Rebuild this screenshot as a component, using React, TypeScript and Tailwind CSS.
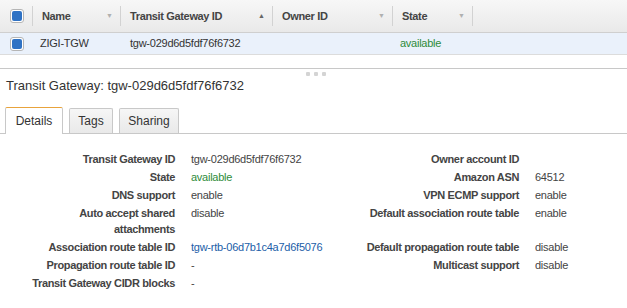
import { ReactNode } from "react";

function Check() {
  return (
    <div className="flex h-[14px] w-[14px] items-center justify-center rounded-[3px] border border-[#b5b5b5] bg-white">
      <div className="h-[10px] w-[10px] rounded-[2px] bg-[#2f72c4]" />
    </div>
  );
}

function Head({ label, w, up }: { label: string; w: string; up?: boolean }) {
  return (
    <div className={`flex h-full items-center border-l border-[#d2d2d2] ${w}`}>
      <div className="flex h-full w-full items-center justify-between pl-[9px] pr-[7px]">
        <span className="font-bold tracking-[-0.35px] text-[#444]">{label}</span>
        <span className={`text-[7px] ${up ? "text-[#666]" : "text-[#b0b0b0]"}`}>{up ? "▲" : "▼"}</span>
      </div>
    </div>
  );
}

function Row({ label, value, label2, value2 }: { label: ReactNode; value: ReactNode; label2?: string; value2?: ReactNode }) {
  return (
    <>
      <div className="text-right font-bold tracking-[-0.35px] text-[#444]">{label}</div>
      <div className="tracking-[-0.25px] text-[#444]">{value}</div>
      <div className="text-right font-bold tracking-[-0.35px] text-[#444]">{label2}</div>
      <div className="tracking-[-0.25px] text-[#444]">{value2}</div>
    </>
  );
}

export default function App() {
  return (
    <div className="h-[308px] w-[627px] overflow-hidden bg-white text-[11px] text-[#444]" style={{ fontFamily: '"Liberation Sans", Arial, sans-serif' }}>
      {/* grid header */}
      <div className="flex h-[33px] items-center border-b border-[#cfcfcf] bg-gradient-to-b from-[#f7f7f7] to-[#e9e9e9] py-[6px]">
        <div className="flex w-[32px] justify-center pl-[1px]">
          <Check />
        </div>
        <Head label="Name" w="w-[88px]" />
        <Head label="Transit Gateway ID" w="w-[152px]" up />
        <Head label="Owner ID" w="w-[120px]" />
        <Head label="State" w="w-[80px]" />
        <div className="h-full border-l border-[#d2d2d2]" />
      </div>
      {/* row */}
      <div className="flex h-[22px] items-center border-b border-[#dcdcdc] bg-[#eaf1fb] tracking-[-0.25px]">
        <div className="flex w-[32px] justify-center pl-[1px]">
          <Check />
        </div>
        <div className="w-[98px] pl-[8px] text-[#333]">ZIGI-TGW</div>
        <div className="w-[270px] text-[#333]">tgw-029d6d5fdf76f6732</div>
        <div className="text-[#2e8b3a]">available</div>
      </div>

      {/* splitter */}
      <div className="mt-[13px] border-t border-[#c8c8c8]" />
      <div className="flex justify-center gap-[4px] pt-[3px] pl-[4px]">
        <div className="h-[4px] w-[4px] rounded-[1px] bg-[#d4d4d4]" />
        <div className="h-[4px] w-[4px] rounded-[1px] bg-[#d4d4d4]" />
        <div className="h-[4px] w-[4px] rounded-[1px] bg-[#d4d4d4]" />
      </div>

      <div className="pl-[6px] pt-[2px] text-[13px] leading-[16px] text-[#333]">Transit Gateway: tgw-029d6d5fdf76f6732</div>

      {/* tabs */}
      <div className="mt-[13px] flex items-end gap-[6px] border-b border-[#c8c8c8] pl-[5px]">
        <div className="-mb-px flex h-[27px] w-[58px] items-center justify-center rounded-t-[2px] border border-b-0 border-[#c8c8c8] border-t-[#e8a33c] bg-white text-[12px] text-[#333]">Details</div>
        <div className="flex h-[25px] w-[44px] items-center justify-center rounded-t-[2px] border border-b-0 border-[#c8c8c8] bg-gradient-to-b from-[#f6f6f6] to-[#e9e9e9] text-[12px] text-[#333]">Tags</div>
        <div className="flex h-[25px] w-[60px] items-center justify-center rounded-t-[2px] border border-b-0 border-[#c8c8c8] bg-gradient-to-b from-[#f6f6f6] to-[#e9e9e9] text-[12px] text-[#333]">Sharing</div>
      </div>

      {/* details */}
      <div className="grid grid-cols-[145px_157px_155px_1fr] gap-x-4 gap-y-[2px] pl-[30px] pt-[17px] leading-[16px]">
        <Row label="Transit Gateway ID" value="tgw-029d6d5fdf76f6732" label2="Owner account ID" value2="" />
        <Row label="State" value={<span className="text-[#2e8b3a]">available</span>} label2="Amazon ASN" value2="64512" />
        <Row label="DNS support" value="enable" label2="VPN ECMP support" value2="enable" />
        <Row label="Auto accept shared attachments" value="disable" label2="Default association route table" value2="enable" />
        <Row label="Association route table ID" value={<span className="text-[#215ea8]">tgw-rtb-06d7b1c4a7d6f5076</span>} label2="Default propagation route table" value2="disable" />
        <Row label="Propagation route table ID" value="-" label2="Multicast support" value2="disable" />
        <Row label="Transit Gateway CIDR blocks" value="-" />
      </div>
    </div>
  );
}
